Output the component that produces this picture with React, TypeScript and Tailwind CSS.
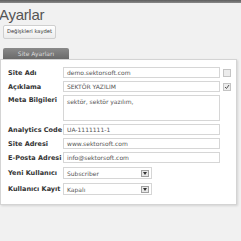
import React from 'react';

const rows = [
  { label: 'Site Adı', value: 'demo.sektorsoft.com', check: 'off' },
  { label: 'Açıklama', value: 'SEKTÖR YAZILIM', check: 'on' },
];

const rows2 = [
  { label: 'Analytics Code', value: 'UA-1111111-1' },
  { label: 'Site Adresi', value: 'www.sektorsoft.com' },
  { label: 'E-Posta Adresi', value: 'info@sektorsoft.com' },
];

const selects = [
  { label: 'Yeni Kullanıcı', value: 'Subscriber' },
  { label: 'Kullanıcı Kayıt', value: 'Kapalı' },
];

const Label = ({ text, top }: { text: string; top?: boolean }) => (
  <div className={`w-[55px] shrink-0 text-[6.5px] font-bold text-[#333] leading-[8px] whitespace-nowrap ${top ? 'self-start pt-[1px]' : ''}`}>
    {text}
  </div>
);

const Field = ({ value }: { value: string }) => (
  <div className="w-[157px] h-[11px] border border-[#d6d6d6] bg-white px-[3px] text-[6px] leading-[9px] text-[#555] whitespace-nowrap overflow-hidden">
    {value}
  </div>
);

const Check = ({ on }: { on: boolean }) => (
  <div className="w-[8px] h-[8px] border border-[#c4c4c4] bg-[#ececec] flex items-center justify-center">
    {on && (
      <svg width="6" height="6" viewBox="0 0 6 6">
        <path d="M1 3 L2.5 4.5 L5 1" fill="none" stroke="#555" strokeWidth="1" />
      </svg>
    )}
  </div>
);

const Select = ({ value }: { value: string }) => (
  <div className="w-[89px] h-[12px] border border-[#d6d6d6] bg-white flex items-center justify-between pl-[3px] pr-[2px]">
    <span className="text-[6px] leading-[9px] text-[#555]">{value}</span>
    <div className="w-[8px] h-[7px] border border-[#a0a0a0] bg-[#e8e8e8] flex items-center justify-center">
      <svg width="4" height="3" viewBox="0 0 4 3">
        <path d="M0 0 H4 L2 3 Z" fill="#333" />
      </svg>
    </div>
  </div>
);

export default function App() {
  return (
    <div className="w-[241px] h-[241px] overflow-hidden bg-[#f1f1f1] flex flex-col" style={{ fontFamily: '"DejaVu Sans", Verdana, sans-serif' }}>
      <div className="h-[3px] bg-gradient-to-b from-[#5e5e5e] to-[#8a8a8a]" />
      <div className="ml-[-1px] mt-[4px] text-[15px] leading-[16px] text-[#555] tracking-[-0.3px]" style={{ fontFamily: '"Liberation Sans", Arial, sans-serif' }}>
        Ayarlar
      </div>
      <div className="mt-[2px] ml-[3px] w-[53px] h-[14px] rounded-[2px] border border-[#cfcfcf] bg-gradient-to-b from-white to-[#ececec] flex items-center justify-center text-[5.2px] text-[#333] whitespace-nowrap">
        Değişkleri kaydet
      </div>
      <div className="mt-[9px] ml-[3px] w-[66px] h-[11px] rounded-t-[2px] bg-gradient-to-b from-[#8a8a8a] to-[#6a6a6a] flex items-center justify-center text-[6px] text-[#dcdcdc] whitespace-nowrap">
        Site Ayarları
      </div>
      <div className="w-[237px] bg-white border border-[#d4d4d4] shadow-[1px_1px_2px_rgba(0,0,0,0.12)] pl-[7px] pt-[7px] pb-[9px] flex flex-col gap-[3px]">
        {rows.map((r) => (
          <div key={r.label} className="flex items-center">
            <Label text={r.label} />
            <Field value={r.value} />
            <div className="ml-[3px]">
              <Check on={r.check === 'on'} />
            </div>
          </div>
        ))}
        <div className="flex">
          <Label text="Meta Bilgileri" top />
          <div className="w-[157px] h-[26px] border border-[#d6d6d6] bg-white px-[3px] pt-[2px] text-[6px] leading-[8px] text-[#555]">
            sektör, sektör yazılım,
          </div>
        </div>
        {rows2.map((r) => (
          <div key={r.label} className="flex items-center">
            <Label text={r.label} />
            <Field value={r.value} />
          </div>
        ))}
        {selects.map((s) => (
          <div key={s.label} className="flex items-center mt-[1px]">
            <Label text={s.label} />
            <Select value={s.value} />
          </div>
        ))}
      </div>
    </div>
  );
}
